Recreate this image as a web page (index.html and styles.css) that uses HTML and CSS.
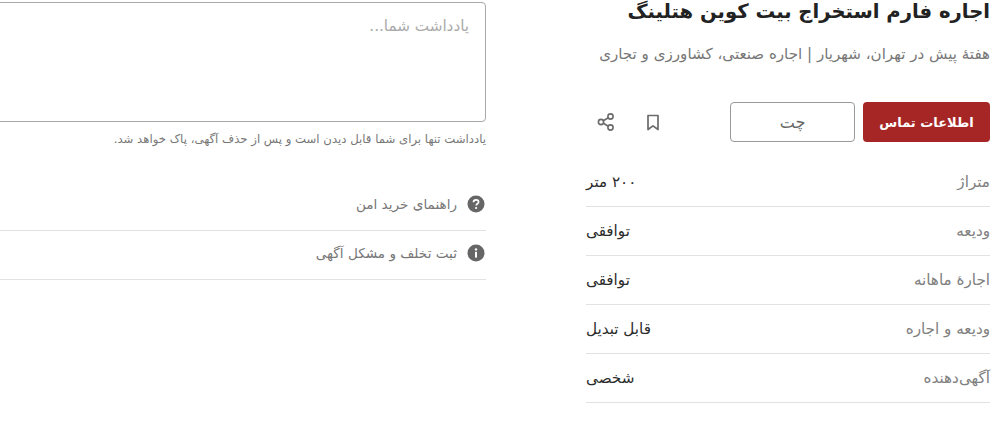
FILE: index.html
```html
<!DOCTYPE html>
<html lang="fa" dir="rtl">
  <head>
    <meta charset="UTF-8" />
    <meta name="viewport" content="width=device-width, initial-scale=1.0" />
    <title>اجاره فارم استخراج بیت کوین هتلینگ</title>
    <link rel="stylesheet" href="styles.css">
  </head>
  <body>
    <main class="post">
      <!-- ستون راست -->
      <section class="info">
        <h1>اجاره فارم استخراج بیت کوین هتلینگ</h1>
        <p class="subtitle">هفتهٔ پیش در تهران، شهریار | اجاره صنعتی، کشاورزی و تجاری</p>
        <div class="actions">
          <button class="btn btn-primary">اطلاعات تماس</button>
          <button class="btn btn-outline">چت</button>
          <div class="icons">
            <button class="icon-btn" aria-label="نشان کردن">
              <svg width="24" height="24" viewBox="0 0 24 24" fill="none" stroke="#6b6b6b" stroke-width="1.7" stroke-linejoin="round">
                <path d="M7 5.5h10v14l-5-3.6-5 3.6z" />
              </svg>
            </button>
            <button class="icon-btn" aria-label="اشتراک گذاری">
              <svg width="24" height="24" viewBox="0 0 24 24" fill="none" stroke="#6b6b6b" stroke-width="1.6">
                <circle cx="16.5" cy="6.5" r="2.6" />
                <circle cx="7" cy="12" r="2.6" />
                <circle cx="16.5" cy="17.5" r="2.6" />
                <path d="M9.3 10.7l5-2.9M9.3 13.3l5 2.9" />
              </svg>
            </button>
          </div>
        </div>
        <div class="rows">
          <div class="row"><span class="label">متراژ</span><span class="value">۲۰۰ متر</span></div>
          <div class="row"><span class="label">ودیعه</span><span class="value">توافقی</span></div>
          <div class="row"><span class="label">اجارهٔ ماهانه</span><span class="value">توافقی</span></div>
          <div class="row"><span class="label">ودیعه و اجاره</span><span class="value">قابل تبدیل</span></div>
          <div class="row"><span class="label">آگهی‌دهنده</span><span class="value">شخصی</span></div>
        </div>
      </section>
      <!-- ستون چپ -->
      <section class="side">
        <textarea class="note" placeholder="یادداشت شما..."></textarea>
        <p class="hint">یادداشت تنها برای شما قابل دیدن است و پس از حذف آگهی، پاک خواهد شد.</p>
        <div class="links">
          <a class="link">
            <svg width="18" height="18" viewBox="0 0 18 18">
              <circle cx="9" cy="9" r="8.5" fill="#666" />
              <path d="M6.5 7.2c0-1.5 1.1-2.4 2.6-2.4s2.5.9 2.5 2.1c0 1.9-2.4 1.8-2.4 3.6" fill="none" stroke="#fff" stroke-width="1.7" />
              <circle cx="9.1" cy="13" r="1.1" fill="#fff" />
            </svg>
            راهنمای خرید امن
          </a>
          <a class="link">
            <svg width="18" height="18" viewBox="0 0 18 18">
              <circle cx="9" cy="9" r="8.5" fill="#666" />
              <circle cx="9" cy="5.4" r="1.2" fill="#fff" />
              <rect x="8" y="7.8" width="2" height="5.8" fill="#fff" />
            </svg>
            ثبت تخلف و مشکل آگهی
          </a>
        </div>
      </section>
    </main>
  </body>
</html>
```

FILE: styles.css
```css
html, body {
  margin: 0;
  height: 100%;
  overflow: hidden;
  background: #fff;
}
body {
  font-family: "DejaVu Sans", sans-serif;
  color: #2b2b2b;
}
.post {
  display: grid;
  grid-template-columns: 404px 500px;
  column-gap: 100px;
  padding-right: 10px;
}

/* right column */
.info h1 {
  margin: -4px 0 0;
  font-size: 19.6px;
  line-height: 32px;
  font-weight: 700;
  color: #222;
}
.subtitle {
  margin: 14px 0 0;
  font-size: 15.1px;
  line-height: 24px;
  color: #777;
}
.actions {
  display: flex;
  align-items: center;
  gap: 8px;
  margin-top: 36px;
}
.btn {
  width: 125px;
  height: 40px;
  border-radius: 4px;
  font-family: inherit;
}
.btn-primary {
  width: 127px;
  background: #a62626;
  border: 0;
  color: #fff;
  font-size: 13px;
  font-weight: 700;
}
.btn-outline {
  background: #fff;
  border: 1px solid #999;
  color: #666;
  font-size: 16px;
}
.icons {
  display: flex;
  gap: 23px;
  margin-right: auto;
  padding-left: 8px;
}
.icon-btn {
  display: flex;
  padding: 0;
  background: none;
  border: 0;
}
.rows {
  margin-top: 16px;
}
.row {
  display: flex;
  justify-content: space-between;
  align-items: center;
  height: 48px;
  border-bottom: 1px solid #e2e2e2;
  font-size: 15.2px;
}
.label {
  color: #808080;
}
.value {
  color: #2b2b2b;
}

/* left column */
.side {
  padding-top: 2px;
}
.note {
  display: block;
  box-sizing: border-box;
  width: 100%;
  height: 120px;
  padding: 14px 16px;
  border: 1px solid #a8a8a8;
  border-radius: 4px;
  font-family: inherit;
  font-size: 15.2px;
  resize: none;
}
.note::placeholder {
  color: #aaa;
}
.hint {
  margin: 8px 0 0;
  font-size: 11.7px;
  line-height: 18px;
  color: #777;
}
.links {
  margin-top: 34px;
}
.link {
  display: flex;
  align-items: center;
  gap: 10px;
  height: 43px;
  padding: 0 1px 5px 0;
  border-bottom: 1px solid #e2e2e2;
  font-size: 13.6px;
  color: #777;
}
```
